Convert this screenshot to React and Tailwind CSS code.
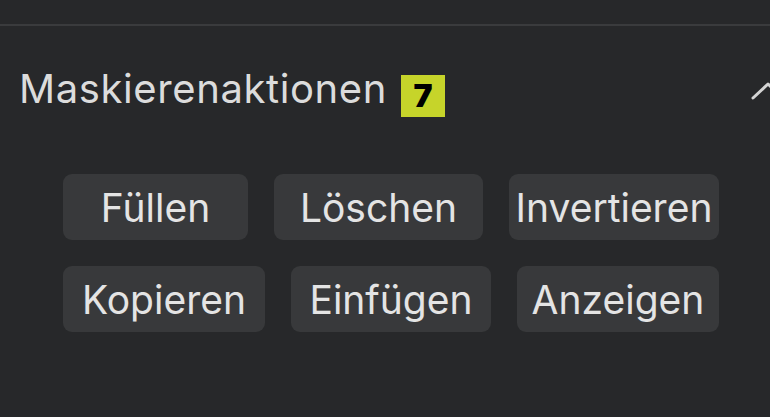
import React from "react";

const row1 = [
  { label: "Füllen", w: "w-[185px]" },
  { label: "Löschen", w: "w-[209px]" },
  { label: "Invertieren", w: "w-[210px]" },
];
const row2 = [
  { label: "Kopieren", w: "w-[202px]" },
  { label: "Einfügen", w: "w-[200px]" },
  { label: "Anzeigen", w: "w-[202px]" },
];

function Btn({ label, w }) {
  return (
    <button
      className={`${w} h-[66px] rounded-[9px] bg-[#38393b] text-[#e4e4e4] text-[39px] leading-none flex items-center justify-center`}
    >
      {label}
    </button>
  );
}

export default function App() {
  return (
    <div
      className="w-[770px] h-[417px] bg-[#27282a] overflow-hidden flex flex-col"
      style={{ fontFamily: "Inter, 'Noto Sans', sans-serif" }}
    >
      <div className="h-[24px]" />
      <div className="h-[2px] bg-[#3a3b3d]" />
      <div className="flex items-start pl-[19px] pt-[42px] relative">
        <span className="text-[40px] leading-[42px] text-[#dcdcdc] tracking-[0.6px]">
          Maskierenaktionen
        </span>
        <span className="ml-[14px] mt-[7px] w-[44px] h-[42px] bg-[#c6d42a] text-black font-black text-[32px] flex items-center justify-center leading-none">
          7
        </span>
        <svg
          className="absolute left-[748px] top-[50px]"
          width="40"
          height="30"
          viewBox="0 0 40 30"
          fill="none"
        >
          <path
            d="M5 22 L20 8 L35 22"
            stroke="#d4d4d4"
            strokeWidth="3"
            strokeLinecap="round"
            strokeLinejoin="round"
          />
        </svg>
      </div>
      <div className="flex flex-col gap-[26px] pl-[63px] mt-[57px]">
        <div className="flex gap-[26px]">
          {row1.map((b) => (
            <Btn key={b.label} {...b} />
          ))}
        </div>
        <div className="flex gap-[26px]">
          {row2.map((b) => (
            <Btn key={b.label} {...b} />
          ))}
        </div>
      </div>
    </div>
  );
}
